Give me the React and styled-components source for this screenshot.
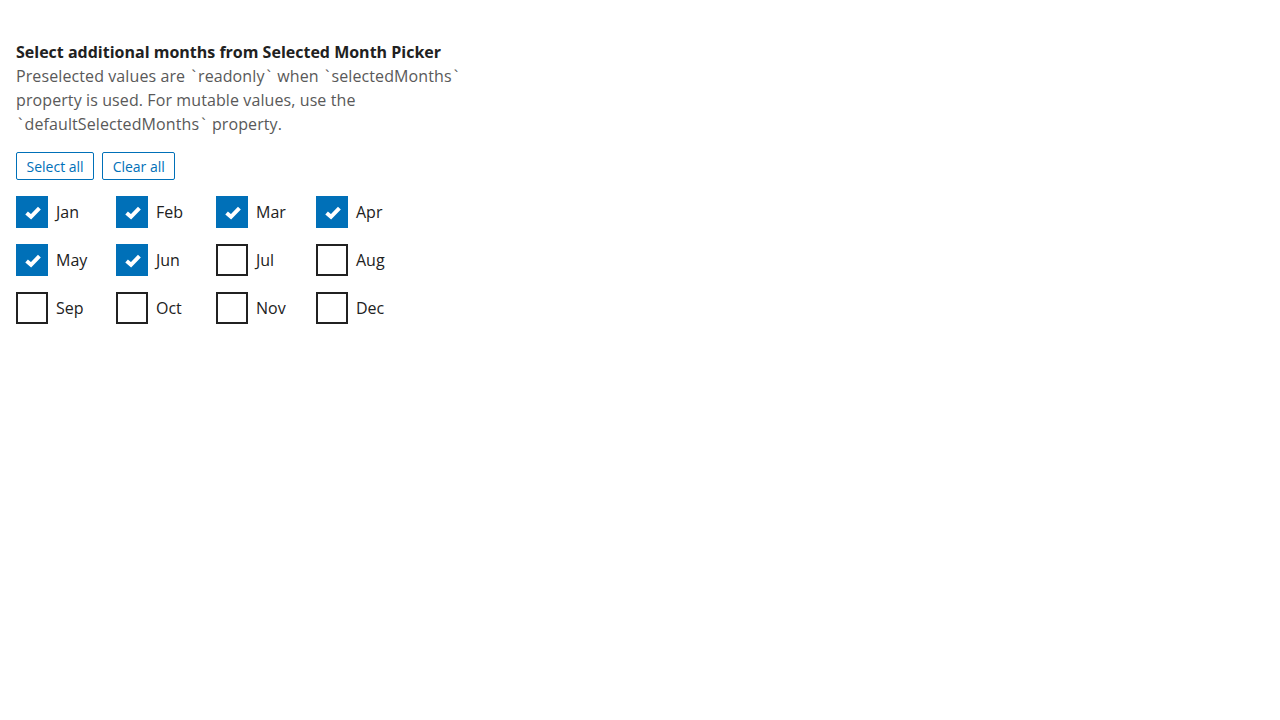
import React, { useState } from "react";
import styled, { createGlobalStyle } from "styled-components";

const GlobalStyle = createGlobalStyle`
    body {
        margin: 0;
        background: #fff;
        font-family: "Open Sans", "Noto Sans", sans-serif;
    }
`

const Page = styled.div`
    padding: 40px 16px;
    width: 460px;
`

const Title = styled.div`
    font-size: 16px;
    line-height: 24px;
    font-weight: 700;
    color: #212121;
`

const Description = styled.div`
    font-size: 16px;
    line-height: 24px;
    letter-spacing: 0.1px;
    color: #595959;
`

// backticks are set a little wider, as in the design
const Tick = styled.span`
    margin: 0 2px;
`

const Toolbar = styled.div`
    display: flex;
    gap: 8px;
    margin: 16px 0;
`

const Button = styled.button`
    height: 28px;
    padding: 0 9.5px;
    border: 1px solid #0070b8;
    border-radius: 2px;
    background: #fff;
    color: #0070b8;
    font-family: inherit;
    font-size: 14px;
    cursor: pointer;
`

const Grid = styled.div`
    display: grid;
    grid-template-columns: repeat(4, 100px);
    row-gap: 16px;
`

const Option = styled.label`
    display: flex;
    align-items: center;
    gap: 8px;
    font-size: 16px;
    color: #212121;
    cursor: pointer;
`

const Box = styled.span`
    box-sizing: border-box;
    width: 32px;
    height: 32px;
    display: flex;
    align-items: center;
    justify-content: center;
    padding: 2px 0 0 1px;
    border: 2px solid ${p => (p.checked ? "#0070b8" : "#212121")};
    background: ${p => (p.checked ? "#0070b8" : "#fff")};
`

const MONTHS = ["Jan", "Feb", "Mar", "Apr", "May", "Jun", "Jul", "Aug", "Sep", "Oct", "Nov", "Dec"];

const Check = () => (
    <svg width="16" height="14" viewBox="0 0 16 14">
        <path d="M1.6 7 L6 10.8 L14.4 2.2" fill="none" stroke="#fff" strokeWidth="4" strokeLinecap="butt" strokeLinejoin="miter" />
    </svg>
)

const T = () => <Tick>`</Tick>

const App = () => {
    const [selected, setSelected] = useState([0, 1, 2, 3, 4, 5]);

    const toggle = i => {
        setSelected(s => (s.includes(i) ? s.filter(x => x !== i) : [...s, i]));
    }

    return (
        <Page>
            <GlobalStyle />
            <Title>Select additional months from Selected Month Picker</Title>
            <Description>
                Preselected values are <T />readonly<T /> when <T />selectedMonths<T /> property is used. For mutable values, use the <T />defaultSelectedMonths<T /> property.
            </Description>
            <Toolbar>
                <Button onClick={() => setSelected(MONTHS.map((m, i) => i))}>Select all</Button>
                <Button onClick={() => setSelected([])}>Clear all</Button>
            </Toolbar>
            <Grid>
                {MONTHS.map((m, i) => {
                    const on = selected.includes(i);
                    return (
                        <Option key={m} onClick={() => toggle(i)}>
                            <Box checked={on}>{on && <Check />}</Box>
                            {m}
                        </Option>
                    )
                })}
            </Grid>
        </Page>
    )
}

export default App;
